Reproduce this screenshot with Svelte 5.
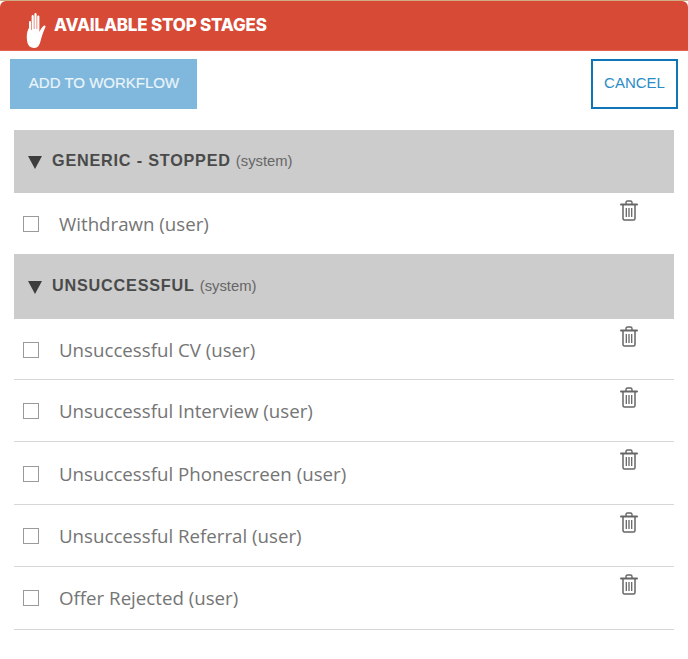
<script lang="ts">
const groups = [
    { name: 'GENERIC - STOPPED', stages: ['Withdrawn (user)'], single: true },
    {
        name: 'UNSUCCESSFUL',
        stages: [
            'Unsuccessful CV (user)',
            'Unsuccessful Interview (user)',
            'Unsuccessful Phonescreen (user)',
            'Unsuccessful Referral (user)',
            'Offer Rejected (user)',
        ],
    },
];
</script>

<div class="dialog">
    <header>
        <svg class="hand" viewBox="0 0 24 38" width="24" height="38" aria-hidden="true">
            <path d="M5 11c0-1.500 2-1.500 2 0v8h.6V5c0-1.500 2.200-1.500 2.200 0v13h.6V3c0-1.500 2.200-1.500 2.200 0v15h.6V5.500c0-1.500 2.200-1.500 2.200 0V21c1-2 2.500-5 4.300-6.200 1.200-.8 2.300.2 1.700 1.500-1.500 3-2.900 7-4.300 11.700-1.200 5-2.600 9-6.600 9-5.500 0-7.500-4-7.700-10.500C2.800 21 4.200 18 5 17z" fill="#fff"/>
        </svg>
        <h1>AVAILABLE STOP STAGES</h1>
    </header>
    <div class="actions">
        <button class="add">ADD TO WORKFLOW</button>
        <button class="cancel">CANCEL</button>
    </div>
    <div class="list">
        {#each groups as group}
            <div class="group" class:first={group.single}>
                <span class="caret"></span>
                <strong>{group.name}</strong>
                <small>(system)</small>
            </div>
            {#each group.stages as stage}
                <div class="stage" class:single={group.single}>
                    <span class="check"></span>
                    <span class="label">{stage}</span>
                    <svg class="trash" viewBox="0 0 18 21" width="18" height="21" aria-hidden="true">
                        <path d="M6 4V2.500C6 1.500 6.800 1 7.500 1h3c.7 0 1.500.5 1.500 1.500V4" fill="none" stroke="#666" stroke-width="1.400"/>
                        <path d="M1 4.500h16" stroke="#666" stroke-width="2" stroke-linecap="round"/>
                        <path d="M3 5v13.500c0 1 .6 1.500 1.500 1.500h9c.9 0 1.500-.5 1.500-1.500V5" fill="none" stroke="#666" stroke-width="1.500"/>
                        <path d="M6.300 8v9M9 8v9M11.700 8v9" stroke="#666" stroke-width="1.300"/>
                    </svg>
                </div>
            {/each}
        {/each}
    </div>
</div>

<style>
:global(body) {
    background: #fff;
}
.dialog {
    width: 688px;
    height: 659px;
    overflow: hidden;
    font-family: "Liberation Sans", Arial, sans-serif;
    background: #fff;
    border-top: 1px solid #cfae85;
    box-sizing: border-box;
}
header {
    height: 50px;
    padding-left: 24px;
    display: flex;
    align-items: center;
    gap: 6px;
    background: #d64a36;
    border-radius: 6px 6px 0 0;
    border-bottom: 1px solid #e5634f;
    box-sizing: border-box;
}
.hand {
    margin-top: 9px;
    flex: none;
}
h1 {
    margin: 0 0 1px;
    font-family: "Inter", "Liberation Sans", sans-serif;
    font-size: 17px;
    font-weight: 800;
    letter-spacing: -0.2px;
    color: #fff;
}
.actions {
    display: flex;
    justify-content: space-between;
    padding: 8px 10px 0 10px;
    height: 50px;
}
button {
    height: 50px;
    font-family: inherit;
    font-size: 15px;
    border-radius: 0;
    cursor: pointer;
}
.add {
    width: 187px;
    background: #7fb8dc;
    border: none;
    color: #eaf4fa;
    padding: 0 0 3px 1px;
    -webkit-text-stroke: 0.2px #eaf4fa;
}
.cancel {
    width: 87px;
    background: #fff;
    border: 2px solid #0f75b5;
    color: #2a8cc8;
    padding: 0 0 3px;
}
.list {
    margin: 21px 14px 0;
}
.group {
    height: 65px;
    padding-left: 14px;
    display: flex;
    align-items: center;
    background: #cccccc;
    color: #4a4a4a;
}
.group.first {
    height: 63px;
}
.caret {
    width: 0;
    height: 0;
    border-left: 7.500px solid transparent;
    border-right: 7.500px solid transparent;
    border-top: 13px solid #3d3d3d;
    margin-right: 10px;
    margin-top: 2px;
}
strong {
    font-size: 16.200px;
    letter-spacing: 0.8px;
    margin-right: 5px;
    margin-top: -2px;
}
small {
    font-size: 14.800px;
    color: #666;
    margin-top: -2px;
}
.stage {
    height: 62.400px;
    padding-left: 9px;
    display: flex;
    align-items: center;
    position: relative;
    border-bottom: 1px solid #d6d6d6;
    box-sizing: border-box;
}
.group + .stage {
    height: 61px;
}
.stage.single {
    border-bottom: none;
}
.check {
    width: 16px;
    height: 16px;
    border: 1px solid #9a9a9a;
    box-sizing: border-box;
    margin-right: 20px;
    margin-top: 1px;
    background: #fff;
}
.label {
    font-family: "Open Sans", "Noto Sans", sans-serif;
    font-size: 18.700px;
    color: #757575;
}
.trash {
    position: absolute;
    right: 36px;
    top: 7px;
}
</style>
